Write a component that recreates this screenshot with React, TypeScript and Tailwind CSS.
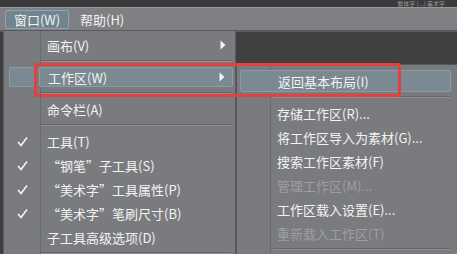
import React from 'react'

const font = { fontFamily: '"Noto Sans CJK SC", "Noto Sans", sans-serif' }

type Item =
  | { kind: 'sep' }
  | { kind: 'item'; label: string; check?: boolean; arrow?: boolean; active?: boolean; disabled?: boolean }

const mainItems: Item[] = [
  { kind: 'item', label: '画布(V)', arrow: true },
  { kind: 'sep' },
  { kind: 'item', label: '工作区(W)', arrow: true, active: true },
  { kind: 'sep' },
  { kind: 'item', label: '命令栏(A)' },
  { kind: 'sep' },
  { kind: 'item', label: '工具(T)', check: true },
  { kind: 'item', label: '“钢笔”子工具(S)', check: true },
  { kind: 'item', label: '“美术字”工具属性(P)', check: true },
  { kind: 'item', label: '“美术字”笔刷尺寸(B)', check: true },
  { kind: 'item', label: '子工具高级选项(D)' },
  { kind: 'sep' },
]

const subItems: Item[] = [
  { kind: 'item', label: '返回基本布局(I)', active: true },
  { kind: 'sep' },
  { kind: 'item', label: '存储工作区(R)...' },
  { kind: 'item', label: '将工作区导入为素材(G)...' },
  { kind: 'item', label: '搜索工作区素材(F)' },
  { kind: 'item', label: '管理工作区(M)...', disabled: true },
  { kind: 'item', label: '工作区载入设置(E)...' },
  { kind: 'item', label: '重新载入工作区(T)', disabled: true },
  { kind: 'sep' },
]

function Check() {
  return (
    <svg width="11" height="11" viewBox="0 0 11 11">
      <path d="M1 6 L4 9.5 L10 1.5" fill="none" stroke="#f4f4f4" strokeWidth="1.7" />
    </svg>
  )
}

function Arrow() {
  return (
    <svg width="6" height="10" viewBox="0 0 6 10">
      <path d="M0.5 0.5 L5.5 5 L0.5 9.5 Z" fill="#f4f4f4" />
    </svg>
  )
}

function Separator({ left }: { left: string }) {
  return (
    <div className={`h-[8px] flex items-center pr-[4px] ${left}`}>
      <div className="w-full h-[2px] border-t border-[#666769] border-b border-b-[#8e8f92]" />
    </div>
  )
}

function MainMenu() {
  return (
    <div className="absolute left-[3px] top-[30px] w-[233px] h-[230px] bg-[#7a7b7e] border border-[#5a5b5e] pt-[2px]">
      {/* icon column divider */}
      <div className="absolute left-[36px] top-0 bottom-0 w-[1px] bg-[#6a6b6e]" />
      {mainItems.map((it, i) =>
        it.kind === 'sep' ? (
          <Separator key={i} left="pl-[37px]" />
        ) : (
          <div key={i} className="h-[24px] flex items-stretch relative">
            <div
              className={`ml-[5px] w-[27px] my-[2px] flex items-center justify-center rounded-[2px] ${
                it.active ? 'bg-[#7a8992] border border-[#8d9ba3]' : ''
              }`}
            >
              {it.check && <Check />}
            </div>
            <div
              className={`ml-[3px] mr-[2px] my-[2px] flex-1 flex items-center pl-[8px] pr-[7px] rounded-[2px] ${
                it.active ? 'bg-[#7a8992] border border-[#8d9ba3]' : ''
              }`}
            >
              <span className="flex-1 text-[13px] leading-none text-[#f3f3f3] whitespace-nowrap">{it.label}</span>
              {it.arrow && <Arrow />}
            </div>
          </div>
        )
      )}
    </div>
  )
}

function SubMenu() {
  return (
    <div className="absolute left-[236px] top-[64px] w-[230px] h-[200px] bg-[#7a7b7e] border border-[#55565a] pt-[4px]">
      <div className="absolute left-[33px] top-0 bottom-0 w-[1px] bg-[#6a6b6e]" />
      {subItems.map((it, i) =>
        it.kind === 'sep' ? (
          <div key={i} className="h-[8px] flex items-center pl-[36px] pr-[15px]">
            <div className="w-full h-[2px] border-t border-[#666769] border-b border-b-[#8e8f92]" />
          </div>
        ) : (
          <div key={i} className="h-[24px] flex items-stretch relative">
            <div
              className={`ml-[3px] mr-[14px] my-[1px] flex-1 flex items-center pl-[37px] rounded-[2px] ${
                it.active ? 'bg-[#7a8992] border border-[#8d9ba3]' : ''
              }`}
            >
              <span
                className={`text-[13px] leading-none whitespace-nowrap ${
                  it.disabled ? 'text-[#9d9ea1]' : 'text-[#f3f3f3]'
                }`}
              >
                {it.label}
              </span>
            </div>
          </div>
        )
      )}
    </div>
  )
}

export default function App() {
  return (
    <div className="relative w-[457px] h-[254px] bg-[#404040] overflow-hidden" style={font}>
      {/* top strip */}
      <div className="h-[7px] bg-[#3b3b3b] flex items-center justify-end pr-[12px] overflow-hidden">
        <span className="text-[6px] leading-none text-[#9a9a9a] whitespace-nowrap">繁体字 (...) 美术字</span>
      </div>
      {/* menu bar */}
      <div className="h-[23px] bg-[#7f8083] border-t border-[#98999c] flex items-center pl-[5px] gap-[11px]">
        <div className="h-[19px] w-[64px] flex items-center justify-center rounded-[2px] bg-[#70858f] border border-[#93a3ab]">
          <span className="text-[13px] leading-none text-[#f3f3f3]">窗口(W)</span>
        </div>
        <span className="text-[13px] leading-none text-[#f3f3f3]">帮助(H)</span>
      </div>
      <div className="h-[2px] bg-[#5b5c5f]" />

      <MainMenu />
      <SubMenu />

      {/* highlight annotation */}
      <div className="absolute left-[34px] top-[63px] w-[367px] h-[34px] border-[3px] border-[#e5403f] rounded-[3px]" />
    </div>
  )
}
